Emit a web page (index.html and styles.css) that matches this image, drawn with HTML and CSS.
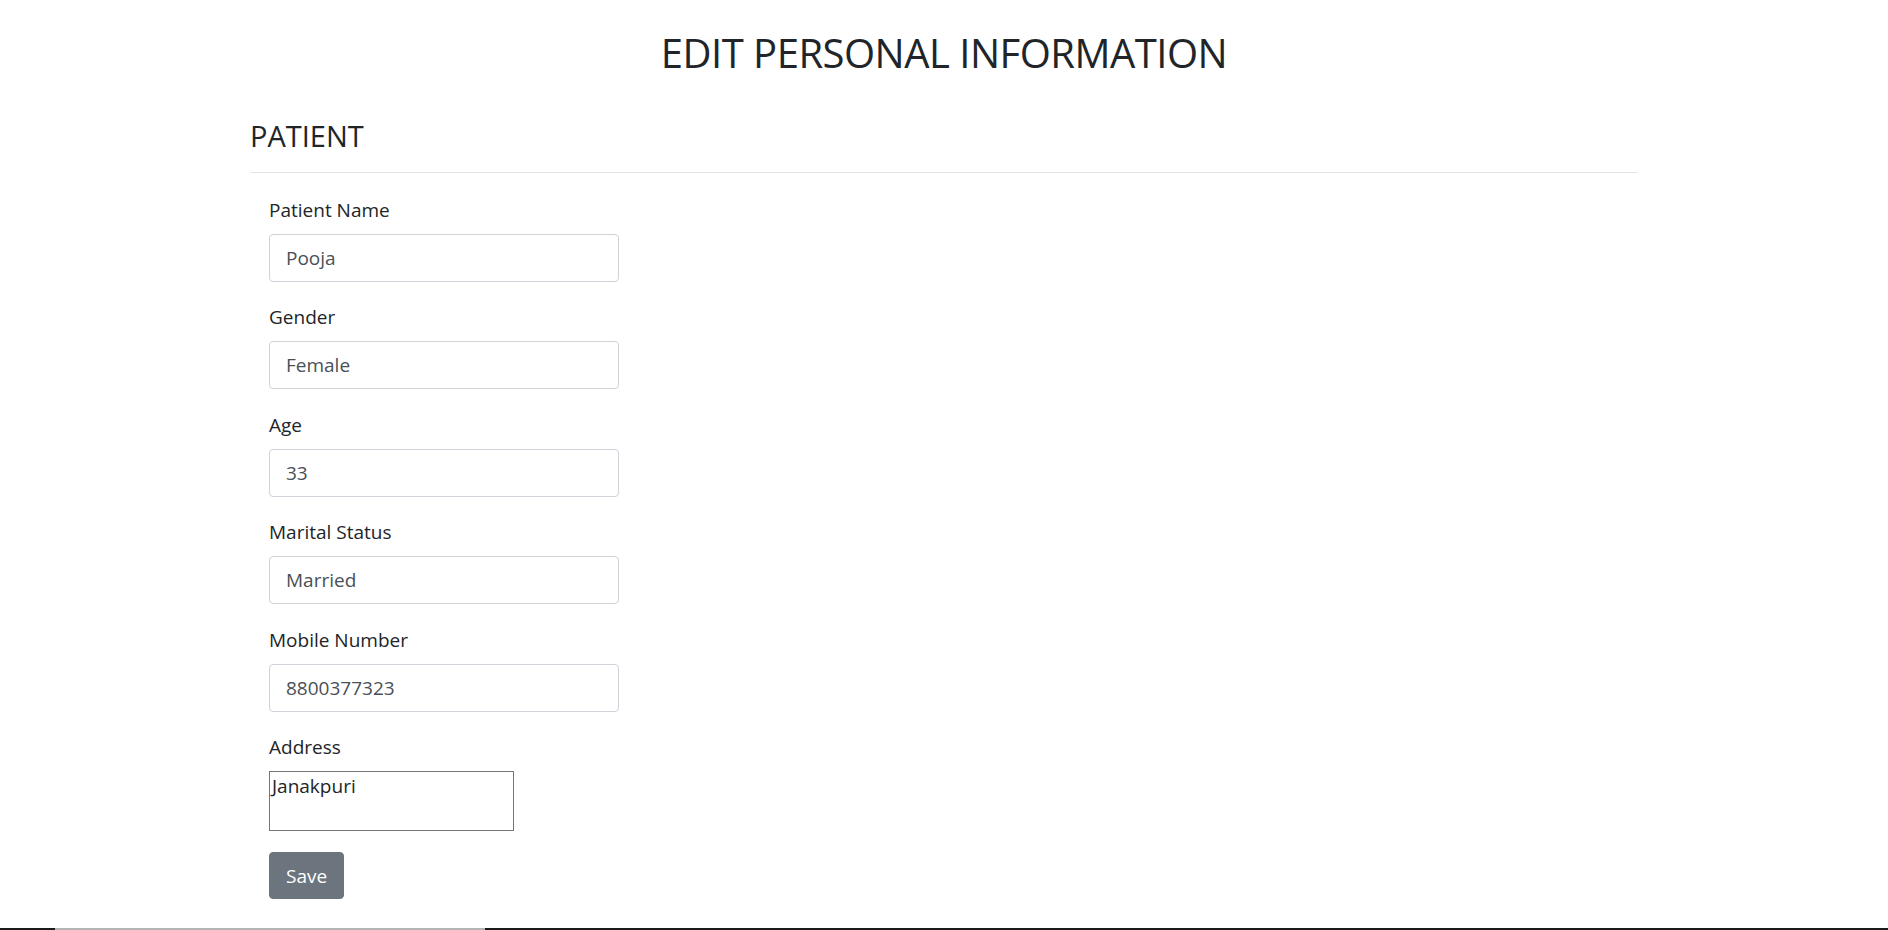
FILE: index.html
```html
<!DOCTYPE html>
<html lang="en">
<head>
<meta charset="utf-8">
<title>Edit Personal Information</title>
<link rel="stylesheet" href="styles.css">
</head>
<body>
<main class="page">
  <h1 class="title">EDIT PERSONAL INFORMATION</h1>
  <h2 class="section">PATIENT</h2>
  <hr class="rule">
  <form class="form">
    <div class="field">
      <label class="label">Patient Name</label>
      <input class="control" type="text" value="Pooja">
    </div>
    <div class="field">
      <label class="label">Gender</label>
      <input class="control" type="text" value="Female">
    </div>
    <div class="field">
      <label class="label">Age</label>
      <input class="control" type="text" value="33">
    </div>
    <div class="field">
      <label class="label">Marital Status</label>
      <input class="control" type="text" value="Married">
    </div>
    <div class="field">
      <label class="label">Mobile Number</label>
      <input class="control" type="text" value="8800377323">
    </div>
    <div class="field field-last">
      <label class="label">Address</label>
      <textarea class="area">Janakpuri</textarea>
    </div>
    <button class="btn" type="button">Save</button>
    <a class="back" href="#">Back to List</a>
  </form>
</main>
<div class="edge"><span class="edge-thumb"></span></div>
</body>
</html>
```
FILE: styles.css
```css
html, body {
  margin: 0;
  padding: 0;
  background: #fff;
  overflow: hidden;
}
body {
  font-family: "Open Sans", "Noto Sans", sans-serif;
  color: #212529;
  font-size: 16px;
}
.page {
  width: 1388px;
  margin: 0 auto;
}
.title {
  margin: 0;
  padding-top: 29px;
  font-size: 40px;
  font-weight: 400;
  line-height: 1.2;
  text-align: center;
  letter-spacing: -0.5px;
}
.section {
  margin: 42px 0 0 0;
  font-size: 29px;
  font-weight: 400;
  line-height: 1.2;
}
.rule {
  margin: 18px 0 0;
  border: 0;
  border-top: 1px solid #e5e5e5;
}
.form {
  display: flex;
  flex-direction: column;
  align-items: flex-start;
  padding: 25px 0 0 19px;
}
.field {
  display: flex;
  flex-direction: column;
  align-items: flex-start;
  margin-bottom: 23.5px;
}
.field-last {
  margin-bottom: 21px;
}
.label {
  font-size: 19px;
  line-height: 24px;
  margin-bottom: 12px;
}
.control {
  box-sizing: border-box;
  width: 350px;
  height: 48px;
  padding: 0 16px;
  font-family: inherit;
  font-size: 19px;
  color: #495057;
  border: 1px solid #ced4da;
  border-radius: 4px;
  background: #fff;
}
.area {
  box-sizing: border-box;
  width: 245px;
  height: 60px;
  padding: 2px;
  margin: 0;
  font-family: inherit;
  font-size: 19px;
  line-height: 1.3;
  color: #212529;
  border: 1px solid #767676;
  border-radius: 0;
  resize: none;
}
.btn {
  box-sizing: border-box;
  height: 47px;
  padding: 0 16px;
  font-family: inherit;
  font-size: 19px;
  color: #fff;
  background: #6c757d;
  border: 1px solid #6c757d;
  border-radius: 4px;
}
.back {
  margin-top: 26px;
  font-size: 19px;
  color: #007bff;
  text-decoration: none;
}
.edge {
  position: fixed;
  left: 0;
  right: 0;
  bottom: 0;
  height: 2px;
  background: #1a1a1a;
}
.edge-thumb {
  position: absolute;
  left: 55px;
  width: 430px;
  top: 0;
  bottom: 0;
  background: #b4b4b4;
}
```
